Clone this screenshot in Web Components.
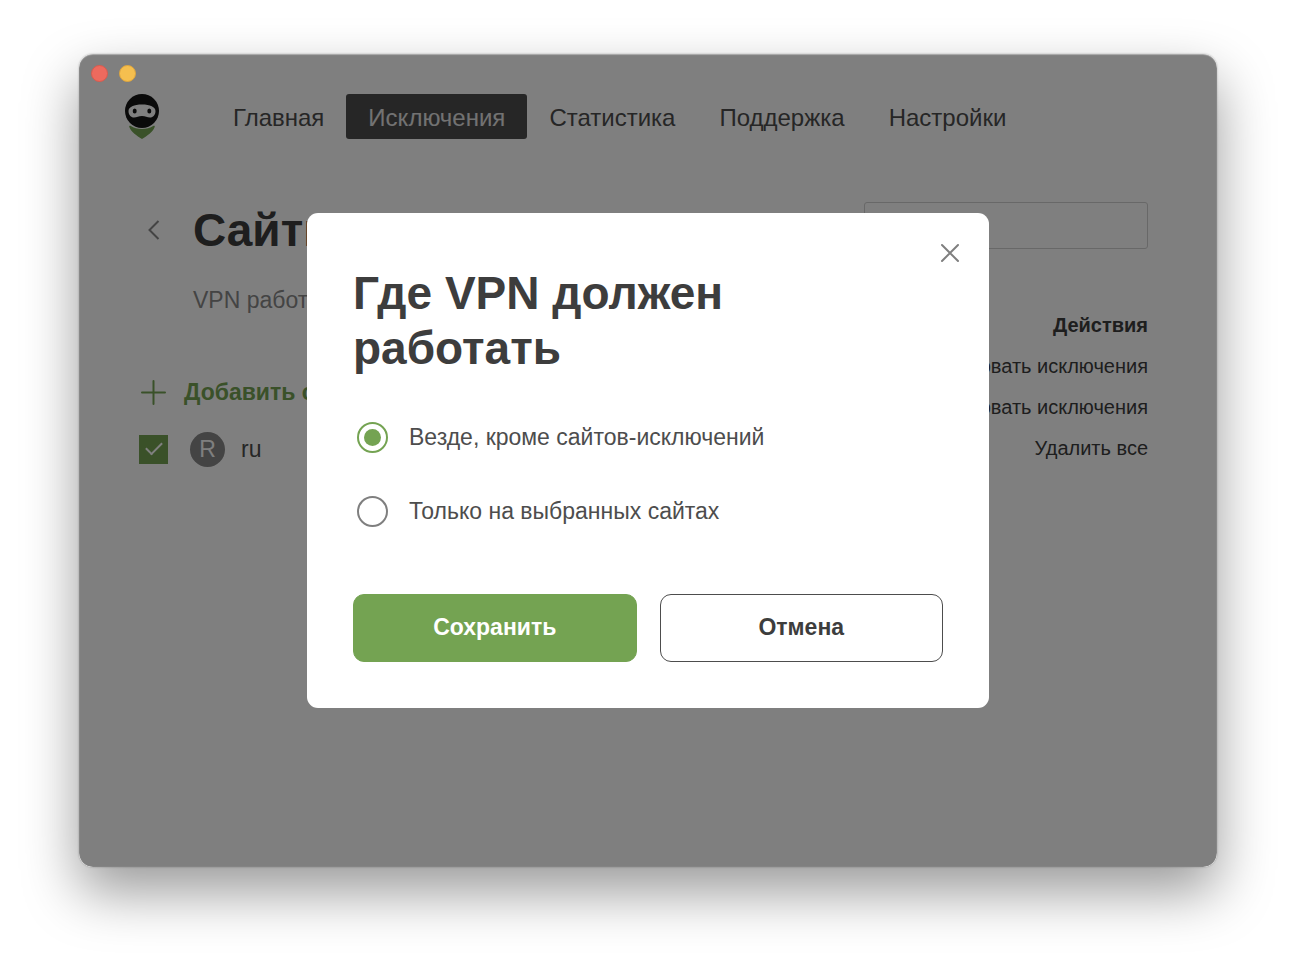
<!DOCTYPE html>
<html lang="ru">
<head>
<meta charset="utf-8">
<meta name="viewport" content="width=device-width, initial-scale=1">
<title>VPN — Исключения</title>
<style>
  html, body { height: 100%; margin: 0; background: #fff; }
  body {
    font: 23px/32px "Liberation Sans", Arial, sans-serif;
    color: #4d4d4d;
    --green: #74a352;
    --ink: #3d3d3d;
  }
</style>
</head>
<body>
<app-window>
  <app-nav slot="header">
    <nav-item>Главная</nav-item>
    <nav-item active>Исключения</nav-item>
    <nav-item>Статистика</nav-item>
    <nav-item>Поддержка</nav-item>
    <nav-item>Настройки</nav-item>
  </app-nav>
  <site-exclusions>
    <span slot="title">Сайты</span>
    <span slot="note">VPN работает</span>
    <span slot="add">Добавить сайт</span>
    <site-row letter="R">ru</site-row>
    <side-actions slot="aside"></side-actions>
  </site-exclusions>
  <mode-dialog slot="dialog">
    <span slot="title">Где VPN должен работать</span>
    <mode-choice></mode-choice>
    <action-button slot="actions" primary>Сохранить</action-button>
    <action-button slot="actions">Отмена</action-button>
  </mode-dialog>
</app-window>

<script>
const define = (name, html) => {
  const template = document.createElement('template');
  template.innerHTML = `<style>
    *, ::before, ::after { box-sizing: border-box; }
    button { font: inherit; color: inherit; background: none; border: 0; padding: 0; cursor: pointer; }
    h1, h2, p, ul { margin: 0; padding: 0; font: inherit; list-style: none; }
    svg { display: block; flex: none; }
  </style>` + html;
  customElements.define(name, class extends HTMLElement {
    constructor() {
      super();
      this.attachShadow({ mode: 'open' }).append(template.content.cloneNode(true));
    }
    connectedCallback() {
      const letter = this.shadowRoot.querySelector('[data-letter]');
      if (letter) letter.textContent = this.getAttribute('letter');
      if (this.hasAttribute('active')) this.shadowRoot.querySelector('a').setAttribute('aria-current', 'page');
    }
  });
};

define('app-window', `
  <style>
    :host { display: flex; box-sizing: border-box; min-height: 100vh; padding: 54px 79px 105px; }
    .frame { position: relative; flex: 1; min-width: 0; display: flex; flex-direction: column; background: #fff; border-radius: 14px; overflow: hidden; }
    .shadow { flex: 1; min-width: 0; display: flex; border-radius: 14px; box-shadow: 0 0 2px rgba(0,0,0,.3), 0 25px 55px rgba(0,0,0,.4); }
    .lights { position: relative; z-index: 2; display: flex; gap: 11px; padding: 11px 12px 12px; }
    .lights button { width: 17px; height: 17px; border-radius: 50%; border: 1px solid #d85a4d; background: #ed6a5e; }
    .lights button + button { border-color: #dfa63c; background: #f5bf4f; }
    .overlay { position: absolute; inset: 0; z-index: 1; display: grid; place-items: center; background: rgba(0,0,0,.5); border-radius: 14px; box-shadow: inset 0 1px 1px rgba(255,255,255,.35), inset 0 0 1px rgba(255,255,255,.4); }
  </style>
  <div class="shadow"><div class="frame">
    <div class="lights"><button aria-label="Закрыть окно"></button><button aria-label="Свернуть окно"></button></div>
    <slot name="header"></slot>
    <slot></slot>
    <div class="overlay"><slot name="dialog"></slot></div>
  </div></div>`);

define('app-nav', `
  <style>
    :host { display: block; }
    header { display: flex; padding-left: 46px; }
    svg { margin-right: 51px; }
    nav { display: flex; font-size: 24px; }
  </style>
  <header>
    <svg width="35" height="46" viewBox="0 0 35 46" aria-hidden="true">
      <circle cx="17" cy="17" r="17" fill="#141414"/>
      <path d="M3.500 17C3.500 13 9 10.500 17 10.500S30.500 13 30.500 17C30.500 21 28 23.500 25 23.500C22 23.500 20.500 22 17 22S12 23.500 9 23.500C6 23.500 3.500 21 3.500 17Z" fill="#fff"/>
      <ellipse cx="9.700" cy="17" rx="2" ry="2.600" fill="#141414"/>
      <ellipse cx="24.300" cy="17" rx="2" ry="2.600" fill="#141414"/>
      <path d="M5.500 31.800C12 36.200 22 36.200 28.500 31.800C29.500 31.400 30 32 29.700 33C27.500 38.500 22.500 41.500 17 45C11.500 41.500 6.500 38.500 4.300 33C4 32 4.500 31.400 5.500 31.800Z" fill="#74a352"/>
    </svg>
    <nav><slot></slot></nav>
  </header>`);

define('nav-item', `
  <style>
    :host { display: block; }
    a { display: block; padding: 0 22px; line-height: 48px; height: 45px; border-radius: 3px; color: #4d4d4d; text-decoration: none; white-space: nowrap; }
    :host([active]) a { background: #4d4d4d; color: #e4e4e4; }
  </style>
  <a href="#"><slot></slot></a>`);

define('site-exclusions', `
  <style>
    :host { display: block; }
    main { display: grid; grid-template-columns: minmax(0, 1fr) 284px; padding: 62px 69px 0 60px; }
    .head { display: grid; grid-template-columns: 54px 1fr; align-items: center; }
    .back { width: 29px; height: 29px; display: grid; place-items: center; }
    h1 { font-size: 46px; line-height: 56px; font-weight: bold; color: var(--ink); white-space: nowrap; }
    p { grid-column: 2; margin-top: 26px; color: #888; white-space: nowrap; }
    .add { display: flex; align-items: center; gap: 16px; margin: 60px 0 23px; font-weight: bold; color: var(--green); white-space: nowrap; }
  </style>
  <main>
    <section>
      <div class="head">
        <button class="back" aria-label="Назад"><svg width="12" height="20" viewBox="0 0 12 20" fill="none" stroke="#888" stroke-width="2"><path d="M10.500 1L1.500 10l9 9"/></svg></button>
        <h1><slot name="title"></slot></h1>
        <p><slot name="note"></slot></p>
      </div>
      <button class="add"><svg width="29" height="29" viewBox="0 0 29 29" stroke="#74a352" stroke-width="2" stroke-linecap="round"><path d="M14.500 3v23M3 14.500h23"/></svg><slot name="add"></slot></button>
      <slot></slot>
    </section>
    <slot name="aside"></slot>
  </main>`);

define('site-row', `
  <style>
    :host { display: block; }
    label { display: flex; align-items: center; height: 36px; }
    input { appearance: none; width: 29px; height: 29px; margin: 0 22px 0 0; border: 1px solid var(--green); display: grid; place-items: center; }
    input:checked { background: var(--green); }
    input:checked::before { content: ""; width: 16px; height: 9px; margin-bottom: 5px; border: solid #fff; border-width: 0 0 2px 2px; transform: rotate(-45deg); }
    .badge { width: 35px; height: 35px; margin-right: 16px; border-radius: 50%; background: #888; color: #fff; text-align: center; line-height: 35px; font-size: 23px; }
  </style>
  <label><input type="checkbox" checked><span class="badge" data-letter></span><slot></slot></label>`);

define('side-actions', `
  <style>
    :host { display: block; font-size: 20px; line-height: 41px; color: var(--ink); }
    input { display: block; width: 100%; height: 47px; padding: 0 12px; font: inherit; border: 1px solid #d0d0d0; border-radius: 3px; background: #fff; margin-bottom: 56px; }
    h2 { font-weight: bold; text-align: right; }
    li { display: flex; justify-content: flex-end; }
    button { white-space: nowrap; }
  </style>
  <input type="search" aria-label="Поиск">
  <h2>Действия</h2>
  <ul>
    <li><button>Экспортировать исключения</button></li>
    <li><button>Импортировать исключения</button></li>
    <li><button>Удалить все</button></li>
  </ul>`);

define('mode-dialog', `
  <style>
    :host { display: block; width: 100%; max-width: 682px; }
    section { position: relative; padding: 53px 46px 46px; background: #fff; border-radius: 11px; }
    .close { position: absolute; top: 23px; right: 22px; width: 34px; height: 34px; display: grid; place-items: center; }
    h2 { max-width: 480px; font-size: 46px; line-height: 55px; font-weight: bold; color: var(--ink); }
    .actions { display: grid; grid-template-columns: 1fr 1fr; gap: 23px; margin-top: 67px; }
  </style>
  <section role="dialog" aria-modal="true" aria-labelledby="title">
    <button class="close" aria-label="Закрыть"><svg width="20" height="20" viewBox="0 0 20 20" fill="none" stroke="#7f7f7f" stroke-width="2" stroke-linecap="round"><path d="M2 2l16 16M18 2L2 18"/></svg></button>
    <h2 id="title"><slot name="title"></slot></h2>
    <slot></slot>
    <div class="actions"><slot name="actions"></slot></div>
  </section>`);

define('mode-choice', `
  <style>
    :host { display: block; margin-top: 45px; }
    div { display: grid; gap: 42px; padding-left: 4px; }
    label { display: flex; align-items: center; gap: 21px; height: 32px; }
    input { appearance: none; flex: none; width: 31px; height: 31px; margin: 0; border: 2px solid #7f7f7f; border-radius: 50%; display: grid; place-items: center; }
    input:checked { border-color: var(--green); }
    input:checked::before { content: ""; width: 17px; height: 17px; border-radius: 50%; background: var(--green); }
  </style>
  <div role="radiogroup">
    <label><input type="radio" name="mode" checked>Везде, кроме сайтов-исключений</label>
    <label><input type="radio" name="mode">Только на выбранных сайтах</label>
  </div>`);

define('action-button', `
  <style>
    :host { display: block; }
    button { width: 100%; height: 68px; padding-bottom: 2px; border: 1px solid #4d4d4d; border-radius: 11px; font-weight: bold; color: var(--ink); }
    :host([primary]) button { background: var(--green); border-color: var(--green); color: #fff; }
  </style>
  <button><slot></slot></button>`);
</script>
</body>
</html>
